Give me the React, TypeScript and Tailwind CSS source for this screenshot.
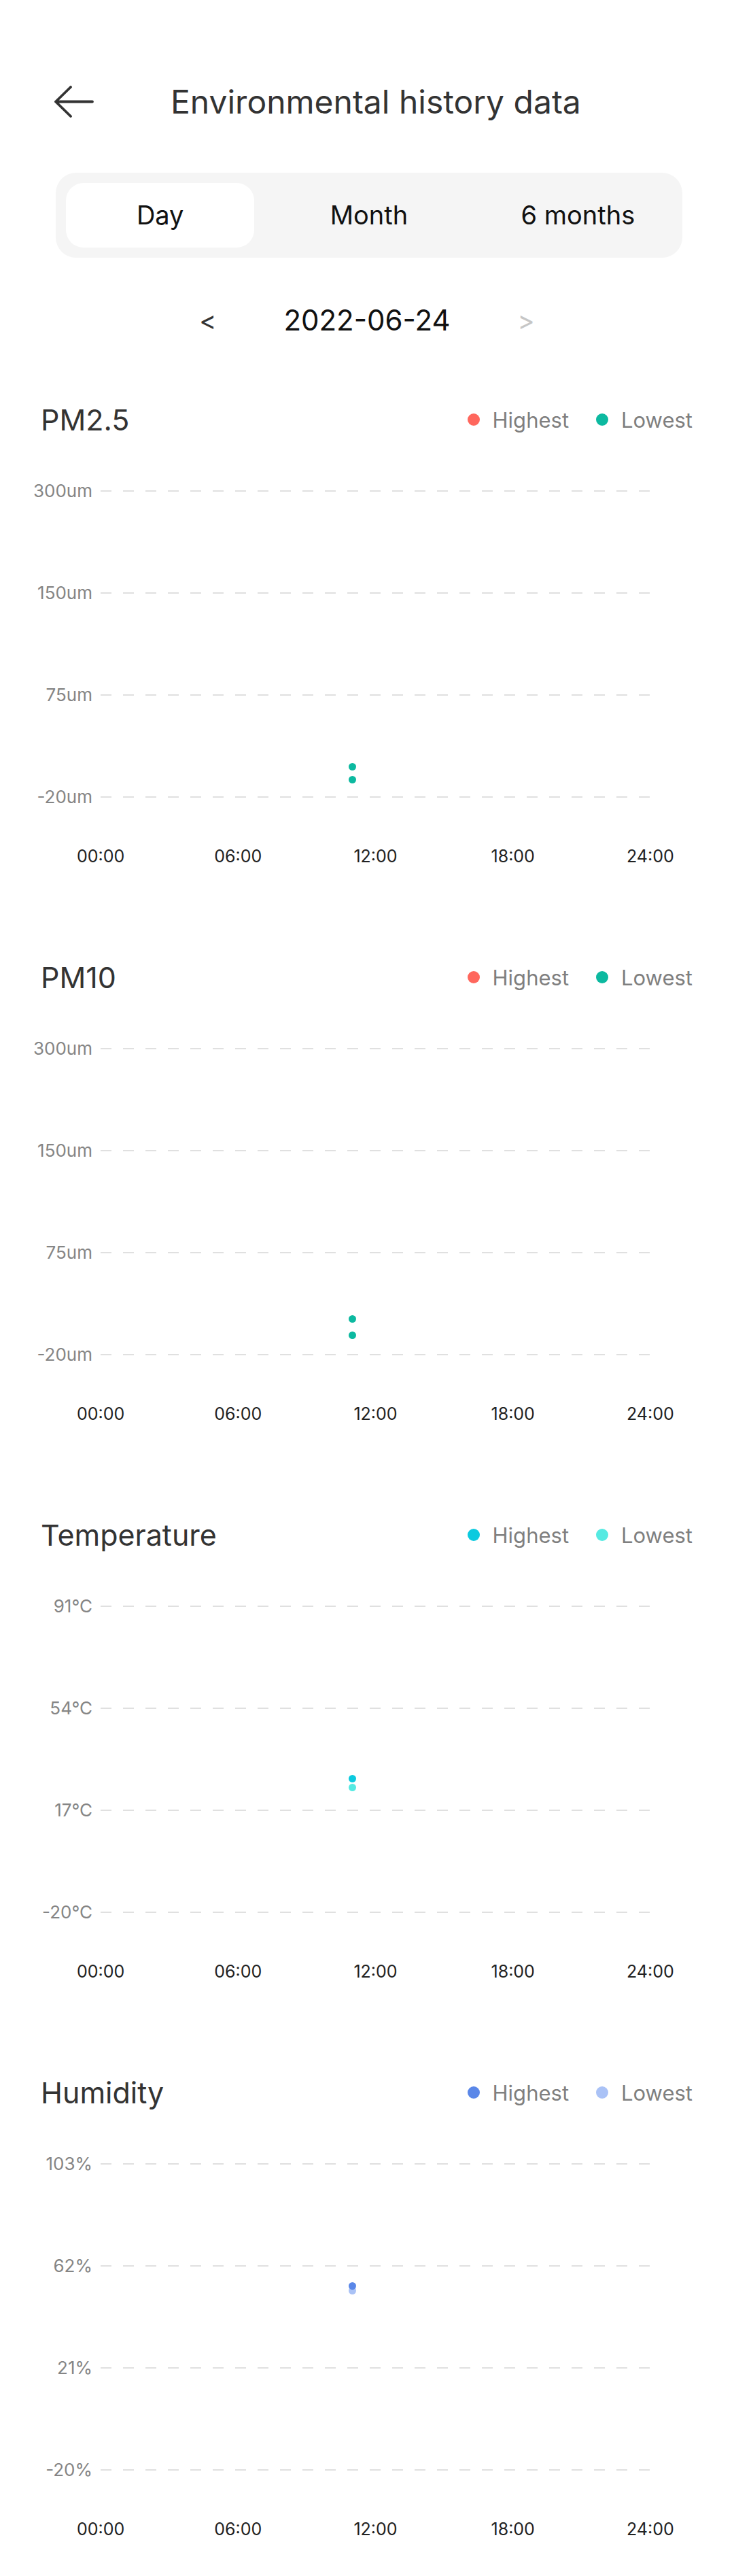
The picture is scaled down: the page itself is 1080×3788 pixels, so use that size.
import React from 'react';

type Dot = { top: number; color: string };

type ChartData = {
  title: string;
  high: string;
  low: string;
  yLabels: string[];
  dots: Dot[];
};

const charts: ChartData[] = [
  {
    title: 'PM2.5',
    high: '#ff675d',
    low: '#0cb9a0',
    yLabels: ['300um', '150um', '75um', '-20um'],
    dots: [
      { top: 480, color: '#0cb9a0' },
      { top: 499, color: '#0cb9a0' },
    ],
  },
  {
    title: 'PM10',
    high: '#ff675d',
    low: '#0cb9a0',
    yLabels: ['300um', '150um', '75um', '-20um'],
    dots: [
      { top: 472, color: '#0cb9a0' },
      { top: 496, color: '#0cb9a0' },
    ],
  },
  {
    title: 'Temperature',
    high: '#0bcadf',
    low: '#56eae2',
    yLabels: ['91°C', '54°C', '17°C', '-20°C'],
    dots: [
      { top: 341, color: '#56eae2' },
      { top: 328, color: '#0bcadf' },
    ],
  },
  {
    title: 'Humidity',
    high: '#5a87e8',
    low: '#aac2f6',
    yLabels: ['103%', '62%', '21%', '-20%'],
    dots: [
      { top: 261, color: '#aac2f6' },
      { top: 254, color: '#5a87e8' },
    ],
  },
];

const hours = ['00:00', '06:00', '12:00', '18:00', '24:00'];

function DashLine() {
  return (
    <svg width="809" height="2" className="block">
      <line x1="0" y1="1" x2="809" y2="1" stroke="#e0e0e0" strokeWidth="2" strokeDasharray="16 17" />
    </svg>
  );
}

function Legend({ color, label }: { color: string; label: string }) {
  return (
    <div className="flex items-center gap-[19px]">
      <span className="h-[18px] w-[18px] rounded-full" style={{ backgroundColor: color }} />
      <span className="text-[31px] leading-none text-[#7f7f7f]">{label}</span>
    </div>
  );
}

function ChartSection({ data }: { data: ChartData }) {
  return (
    <section className="h-[820px]">
      {/* title + legend */}
      <div className="flex h-[60px] items-center justify-between pl-[60px] pr-[61px]">
        <h2 className="text-[43px] font-normal leading-none text-[#333]">{data.title}</h2>
        <div className="flex items-center gap-[40px]">
          <Legend color={data.high} label="Highest" />
          <Legend color={data.low} label="Lowest" />
        </div>
      </div>

      {/* chart */}
      <div className="relative">
        {data.yLabels.map((label) => (
          <div key={label} className="flex h-[150px] items-center">
            <span className="w-[136px] text-right text-[26px] leading-none text-[#858585]">{label}</span>
            <div className="ml-[12px]">
              <DashLine />
            </div>
          </div>
        ))}
        <div className="ml-[47px] grid h-[22px] w-[1011px] grid-cols-5 items-center">
          {hours.map((h) => (
            <span key={h} className="text-center text-[25px] leading-none text-[#222]">
              {h}
            </span>
          ))}
        </div>
        {data.dots.map((d, i) => (
          <span
            key={i}
            className="absolute left-[513px] h-[11px] w-[11px] rounded-full"
            style={{ top: d.top - 5.5, backgroundColor: d.color }}
          />
        ))}
      </div>
    </section>
  );
}

export default function App() {
  return (
    <div
      className="min-h-[3788px] w-[1080px] overflow-hidden bg-white"
      style={{ fontFamily: 'Inter, "Noto Sans", sans-serif' }}
    >
      {/* header */}
      <div className="mt-[120px] flex h-[60px] items-center">
        <svg width="60" height="48" viewBox="0 0 60 48" className="ml-[80px]">
          <path
            d="M24 2 L2 23.5 L24 45 M2 23.5 H56"
            fill="none"
            stroke="#333"
            strokeWidth="3.8"
            strokeLinecap="round"
            strokeLinejoin="round"
          />
        </svg>
        <h1 className="ml-[111px] text-[48px] font-normal leading-none text-[#333]">Environmental history data</h1>
      </div>

      {/* tabs */}
      <div className="ml-[82px] mt-[74px] grid h-[125px] w-[922px] grid-cols-3 rounded-[30px] bg-[#f5f5f5]">
        <div className="m-[15px] flex items-center justify-center rounded-[26px] bg-white text-[38px] text-[#111]">
          Day
        </div>
        <div className="flex items-center justify-center text-[38px] text-[#111]">Month</div>
        <div className="flex items-center justify-center text-[38px] text-[#111]">6 months</div>
      </div>

      {/* date */}
      <div className="mt-[62px] flex h-[60px] items-center justify-center gap-[99px]">
        <span className="text-[38px] leading-none text-[#333]">&lt;</span>
        <span className="text-[42px] leading-none text-[#111]">2022-06-24</span>
        <span className="text-[38px] leading-none text-[#c6c6c6]">&gt;</span>
      </div>

      <div className="mt-[86px]">
        {charts.map((c) => (
          <ChartSection key={c.title} data={c} />
        ))}
      </div>
    </div>
  );
}
